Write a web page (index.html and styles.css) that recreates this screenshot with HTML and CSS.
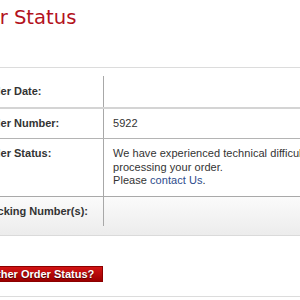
FILE: index.html
```html
<!DOCTYPE html>
<html>
<head>
<meta charset="utf-8">
<link rel="stylesheet" href="styles.css">
</head>
<body>
<div class="page">
  <h1 class="title">Order Status</h1>
  <div class="details">
    <div class="row row-date">
      <div class="label">Order Date:</div>
      <div class="value"></div>
    </div>
    <div class="row row-number">
      <div class="label">Order Number:</div>
      <div class="value">5922</div>
    </div>
    <div class="row row-status">
      <div class="label">Order Status:</div>
      <div class="value">We have experienced technical difficulties processing your order.<br>Please <a class="link" href="#">contact Us</a>.</div>
    </div>
    <div class="row row-tracking">
      <div class="label">Tracking Number(s):</div>
      <div class="value"></div>
    </div>
  </div>
  <div class="actions">
    <a class="button" href="#">Check Another Order Status?</a>
  </div>
</div>
</body>
</html>
```

FILE: styles.css
```css
html, body {
  margin: 0;
  padding: 0;
  background: #ffffff;
  overflow: hidden;
}

.page {
  margin-left: -19px;
  width: 340px;
  font-family: "Liberation Sans", Arial, Helvetica, sans-serif;
  font-size: 11px;
  color: #333333;
}

.title {
  margin: 6px 0 0 -29px;
  font-family: "DejaVu Sans", sans-serif;
  font-weight: normal;
  font-size: 19.6px;
  line-height: 24px;
  color: #b3121d;
  height: 24px;
}

.details {
  margin-top: 37px;
  border-top: 1px solid #dcdcdc;
  padding-top: 8px;
  border-bottom: 1px solid #dadada;
}

.row {
  display: flex;
}

.label {
  width: 122px;
  font-weight: bold;
  flex: none;
}

.value {
  flex: 1;
  border-left: 1px solid #a8a8a8;
  padding-left: 9px;
  letter-spacing: 0.05px;
}

.row-date {
  height: 31px;
  line-height: 31px;
  border-bottom: 2px solid #d4d4d4;
}

.row-number {
  height: 29px;
  line-height: 29px;
  border-bottom: 1px solid #b4b4b4;
}

.row-status {
  line-height: 13.5px;
  border-bottom: 1px solid #a9a9a9;
}

.row-status .label,
.row-status .value {
  padding-top: 8px;
  padding-bottom: 8px;
}

.row-tracking {
  padding-bottom: 9px;
  background: linear-gradient(#fbfbfb, #ececec);
}

.row-tracking .label,
.row-tracking .value {
  height: 29px;
  line-height: 29px;
}

.link {
  color: #2d4b8c;
  text-decoration: none;
}

.actions {
  margin-top: 30px;
  padding-bottom: 14px;
  border-bottom: 1px solid #dcdcdc;
  line-height: 0;
}

.button {
  display: inline-block;
  margin-left: -50px;
  padding: 0 8px;
  height: 14px;
  line-height: 14px;
  border: 1px solid #8c0000;
  background: linear-gradient(#d21414, #9c0000);
  color: #ffffff;
  font-weight: bold;
  font-size: 11px;
  text-decoration: none;
  text-shadow: 0 1px 1px #4a0000;
}
```
